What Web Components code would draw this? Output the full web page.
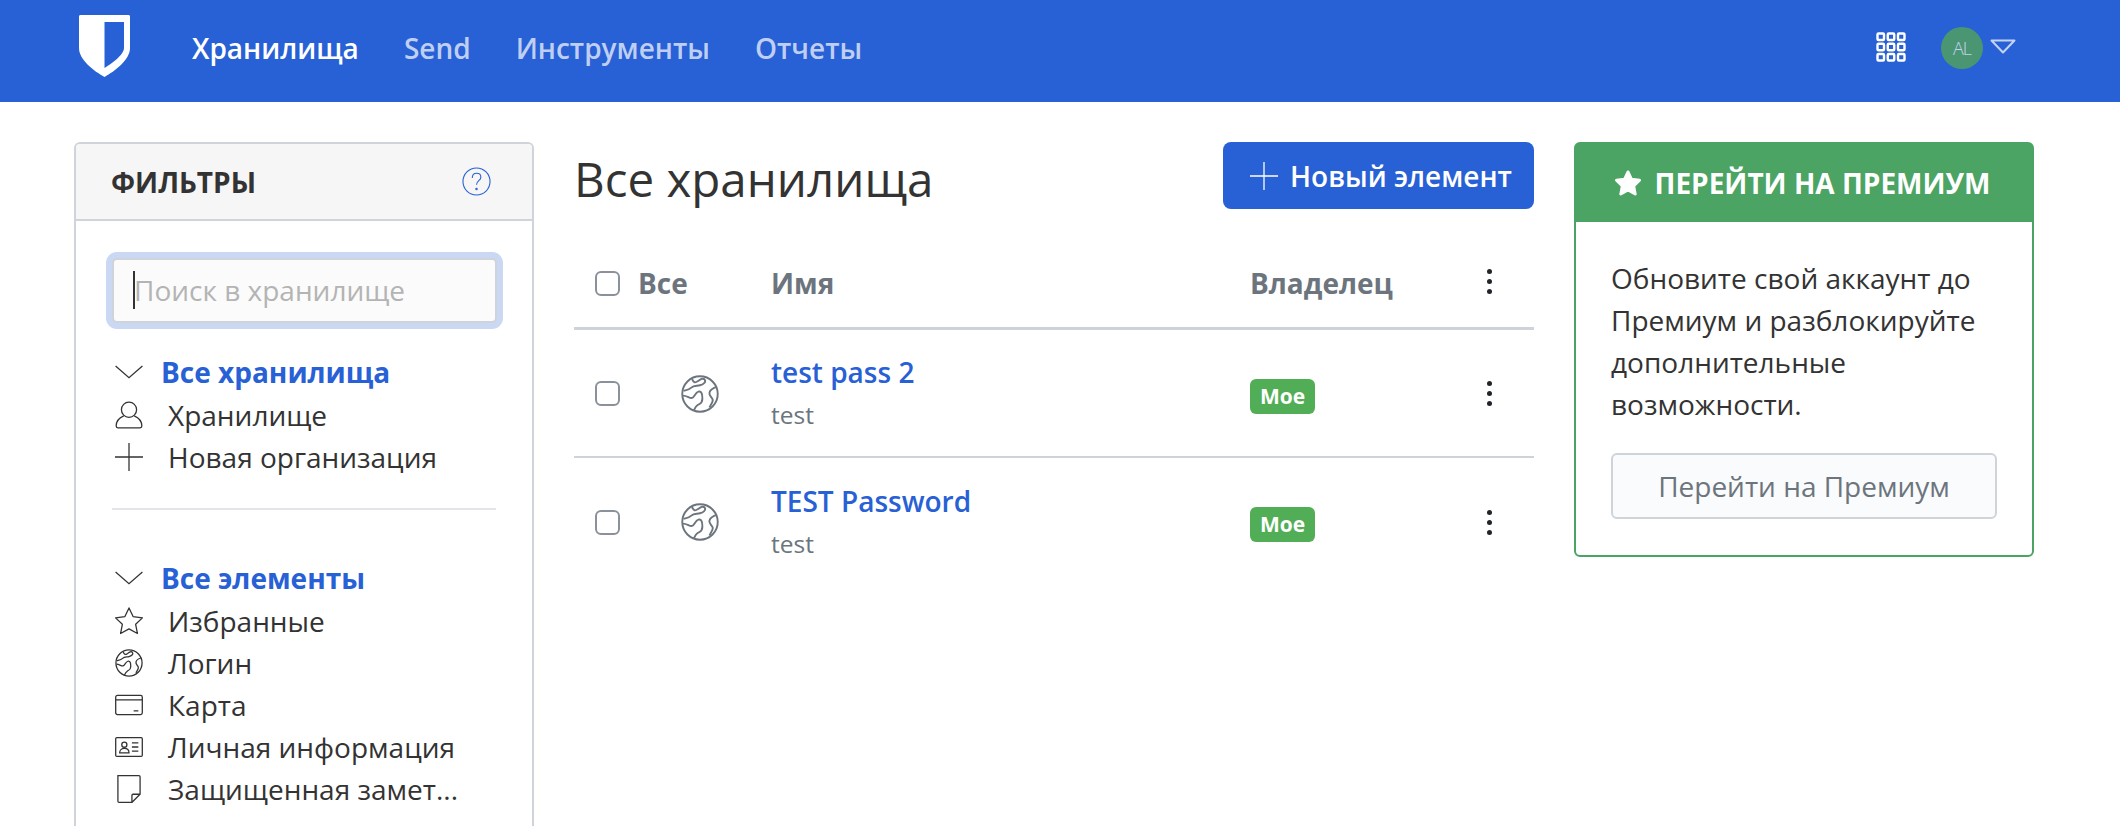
<!DOCTYPE html>
<html lang="ru">
<head>
<meta charset="utf-8">
<title>Хранилища</title>
<style>
  html, body { margin: 0; height: 826px; overflow: hidden; background: #fff; }
  body { font: 28px/42px "Open Sans", "Liberation Sans", sans-serif; color: #333; }
</style>
</head>
<body>
<bw-nav></bw-nav>
<vault-page>
  <filter-panel slot="left"></filter-panel>
  <vault-list slot="mid">
    <vault-row name="test pass 2" sub="test"></vault-row>
    <vault-row name="TEST Password" sub="test"></vault-row>
  </vault-list>
  <premium-card slot="right"></premium-card>
</vault-page>

<script>
const ICONS = {
  chevron: '<path d="M.5 6L12 16 23.5 6"/>',
  user: '<circle cx="12" cy="7.5" r="6.5"/><path d="M7.5 12.8C3.5 14.5 1 18 1 21.5c0 1 .6 1.500 1.500 1.500h19c.9 0 1.500-.5 1.500-1.500 0-3.500-2.500-7-6.500-8.700"/>',
  plus: '<path d="M12 0v24M0 12h24"/>',
  star: '<path d="M12 .8l3.500 7.400 8 1.100-5.800 5.500 1.500 7.900L12 18.800l-7.200 3.900 1.500-7.900L.5 9.300l8-1.100z" stroke-linejoin="round"/>',
  globe: '<circle cx="12" cy="12" r="11.200"/><path d="M7 2.600C8 5 9 5 10.500 4S14 1.500 15 3s-1 3-3 3.500-4 0-5.500 1.500S3.500 9.500 1.600 10M1.200 13c2.800 0 4.300 2 5.800 1.500S9 11 11 10.500s2.500 1.500 2.500 4.500-1.500 3-3 4-2 2.500-2.500 3.500M22.500 7.500C21 8 18.500 9 18 11s1.500 3 2 4.500-1.500 3.500-2 5"/>',
  card: '<rect x=".6" y="3.800" width="22.800" height="16.400" rx="1.500"/><path d="M.6 7.600h22.800M16 17h4"/>',
  id: '<rect x=".6" y="4" width="22.800" height="16" rx="1"/><circle cx="8" cy="10" r="2.200"/><path d="M4 17c0-5 8-5 8 0zM14.500 8.500h5.500M14.500 12h5.500M14.500 15.500h5.500"/>',
  note: '<path d="M2.500 .6h18c.6 0 1 .4 1 1v14.900l-6.900 6.900H3.500c-.6 0-1-.4-1-1zM21.500 16.500h-6c-.6 0-1 .4-1 1v5.900"/>',
  help: '<circle cx="12" cy="12" r="11.200"/><path d="M8.500 9c0-2.300 1.500-3.800 3.600-3.800s3.500 1.400 3.500 3.200c0 2.800-3.600 3-3.600 6.200"/><circle cx="12" cy="18.200" r=".6"/>'
};

class BwIcon extends HTMLElement {
  connectedCallback() {
    const size = this.getAttribute('size') || 28;
    const sw = this.getAttribute('stroke') || 1.1;
    this.attachShadow({ mode: 'open' });
    this.shadowRoot.innerHTML = `
      <style>
        :host { display: inline-flex; flex: none; }
        svg { display: block; fill: none; stroke: currentColor; }
      </style>
      <svg width="${size}" height="${size}" viewBox="0 0 24 24" stroke-width="${sw}">${ICONS[this.getAttribute('name')]}</svg>`;
  }
}
customElements.define('bw-icon', BwIcon);

class BwNav extends HTMLElement {
  connectedCallback() {
    this.attachShadow({ mode: 'open' });
    const grid = [0, 1, 2].flatMap(r => [0, 1, 2].map(c =>
      `<rect x="${1.5 + c * 10.25}" y="${1.5 + r * 10.25}" width="6.5" height="6.5" rx="1"/>`)).join('');
    this.shadowRoot.innerHTML = `
      <style>
        :host { display: flex; align-items: center; height: 102px; padding: 0 104px 6px 79px;
          background: #2860d5; color: #fff; box-sizing: border-box; }
        .logo { display: block; margin: -4px 62px 0 0; }
        a { font-weight: 600; margin-right: 45px; color: #bfcff2; }
        a.on { color: #fff; }
        .apps { margin: -3px 35px 0 auto; display: block; fill: none; stroke: #fff; stroke-width: 2.4; }
        .avatar { width: 42px; height: 42px; border-radius: 50%; background: #4a9673; color: #c5d3ee; display: flex;
          align-items: center; justify-content: center; font: 300 18px "Open Sans", sans-serif; letter-spacing: -1px; }
        .caret { display: block; margin: -3px 0 0 7px; fill: none; stroke: #c5d3f3; stroke-width: 2; stroke-linejoin: round; }
      </style>
      <svg class="logo" width="51" height="62" viewBox="0 0 51 62">
        <path fill="#fff" fill-rule="evenodd" d="M1.500 0H49.500C50.400 0 51 .6 51 1.500V33C51 45 36 56 25.500 62 15 56 0 45 0 33V1.500C0 .6 .6 0 1.500 0ZM25.500 7V53C32 49 45 40 45 33V7Z"/>
      </svg>
      <a class="on">Хранилища</a><a>Send</a><a>Инструменты</a><a>Отчеты</a>
      <svg class="apps" width="30" height="30" viewBox="0 0 30 30">${grid}</svg>
      <div class="avatar">AL</div>
      <svg class="caret" width="26" height="15" viewBox="0 0 26 15"><path d="M1.500 1.500H24.500L13 13.500Z"/></svg>`;
  }
}
customElements.define('bw-nav', BwNav);

class VaultPage extends HTMLElement {
  connectedCallback() {
    this.attachShadow({ mode: 'open' });
    this.shadowRoot.innerHTML = `
      <style>
        :host { display: grid; grid-template-columns: 460px 960px 460px; column-gap: 40px; align-items: start;
          padding: 40px 0 0 74px; }
      </style>
      <slot name="left"></slot><slot name="mid"></slot><slot name="right"></slot>`;
  }
}
customElements.define('vault-page', VaultPage);

class FilterPanel extends HTMLElement {
  connectedCallback() {
    this.attachShadow({ mode: 'open' });
    const item = (icon, text) => `<div class="item"><bw-icon name="${icon}"></bw-icon><span>${text}</span></div>`;
    const head = text => `<div class="head"><bw-icon name="chevron"></bw-icon><b>${text}</b></div>`;
    this.shadowRoot.innerHTML = `
      <style>
        :host { display: block; border: 2px solid #ced4da; border-radius: 6px; height: 690px; box-sizing: border-box; }
        header { display: flex; justify-content: space-between; align-items: center; height: 77px; padding: 0 41px 0 35px;
          background: #f6f6f6; border-bottom: 2px solid #ced4da; border-radius: 4px 4px 0 0; box-sizing: border-box; }
        h2 { margin: 0; font-size: 28px; font-weight: 700; color: #333; }
        header bw-icon { color: #2860d5; }
        .body { padding: 37px 36px 0; }
        .search { height: 65px; width: 385px; border: 2px solid #ced4da; border-radius: 5px; background: #fbfbfb; box-sizing: border-box;
          box-shadow: 0 0 0 6px #cad8f3; padding: 0 0 2px 20px; display: flex; align-items: center;
          color: #b4b4b4; position: relative; }
        .caret { position: absolute; left: 19px; top: 11px; width: 2px; height: 38px; background: #333; }
        .tree { margin-top: 29px; }
        .head, .item { display: flex; align-items: center; height: 42px; color: #333; white-space: nowrap; }
        .head { color: #2860d5; }
        .head bw-icon { color: #333; margin-left: 3px; margin-right: 18px; }
        .head b { font-weight: 700; margin-top: -2px; }
        .item bw-icon { margin-left: 3px; margin-right: 25px; }
        hr { border: 0; border-top: 2px solid #e3e5e8; margin: 30px 0 48px; }
      </style>
      <header><h2>ФИЛЬТРЫ</h2><bw-icon name="help" stroke="0.9" size="29"></bw-icon></header>
      <div class="body">
        <div class="search"><i class="caret"></i>Поиск в хранилище</div>
        <div class="tree">
          ${head('Все хранилища')}
          ${item('user', 'Хранилище')}
          ${item('plus', 'Новая организация')}
          <hr>
          ${head('Все элементы')}
          ${item('star', 'Избранные')}
          ${item('globe', 'Логин')}
          ${item('card', 'Карта')}
          ${item('id', 'Личная информация')}
          ${item('note', 'Защищенная замет...')}
        </div>
      </div>`;
  }
}
customElements.define('filter-panel', FilterPanel);

const ROW_GRID = `display: grid; grid-template-columns: 64px 133px 479px 1fr 70px; align-items: center;`;

class KebabDots extends HTMLElement {
  connectedCallback() {
    this.attachShadow({ mode: 'open' });
    this.shadowRoot.innerHTML = `
      <style>
        :host { display: block; width: 5px; margin-left: 23px; }
        i { display: block; width: 5px; height: 5px; border-radius: 50%; background: #212529; margin-bottom: 5px; }
        i:last-child { margin: 0; }
      </style><i></i><i></i><i></i>`;
  }
}
customElements.define('kebab-dots', KebabDots);

class VaultCheck extends HTMLElement {
  connectedCallback() {
    this.attachShadow({ mode: 'open' });
    this.shadowRoot.innerHTML = `
      <style>
        :host { display: block; width: 25px; height: 25px; margin-left: 21px; box-sizing: border-box;
          border: 2px solid #8b919b; border-radius: 6px; background: #fff; }
      </style>`;
  }
}
customElements.define('vault-check', VaultCheck);

class VaultList extends HTMLElement {
  connectedCallback() {
    this.attachShadow({ mode: 'open' });
    this.shadowRoot.innerHTML = `
      <style>
        :host { display: block; }
        .top { display: flex; justify-content: space-between; align-items: flex-start; height: 99px; }
        h1 { margin: 0; font-size: 47.5px; font-weight: 400; line-height: 60px; color: #333; padding: 7px 0 0; }
        button { display: flex; align-items: center; gap: 12px; height: 67px; width: 311px; padding: 0 0 0 27px; border: 0;
          border-radius: 8px; background: #2860d5; color: #fff; font: 600 28px "Open Sans", sans-serif; box-sizing: border-box; }
        .th { ${ROW_GRID} height: 89px; border-bottom: 3px solid #ced2db; font-weight: 700; color: #6c757d; box-sizing: border-box; }
        .th vault-check, .th span { margin-top: -2px; }
        .th kebab-dots { margin-top: -5px; }
      </style>
      <div class="top">
        <h1>Все хранилища</h1>
        <button><bw-icon name="plus"></bw-icon>Новый элемент</button>
      </div>
      <div class="th">
        <vault-check></vault-check><span>Все</span><span>Имя</span><span>Владелец</span><kebab-dots></kebab-dots>
      </div>
      <slot></slot>`;
  }
}
customElements.define('vault-list', VaultList);

class VaultRow extends HTMLElement {
  connectedCallback() {
    this.attachShadow({ mode: 'open' });
    this.shadowRoot.innerHTML = `
      <style>
        :host { ${ROW_GRID} height: 127.5px; padding-top: 2px; border-bottom: 2px solid #ced2db; box-sizing: border-box; }
        :host(:last-child) { border-bottom: 0; }
        .ic { display: flex; color: #6c757d; margin-left: 43px; }
        .name { color: #2860d5; font-weight: 600; }
        .sub { color: #6c757d; font-size: 24.5px; margin-top: 1px; }
        .owner { display: flex; margin-top: 5px; }
        .badge { background: #52ae56; color: #fff; font-weight: 700; font-size: 21px; line-height: 35px;
          padding: 0 10px; border-radius: 6px; }
      </style>
      <vault-check></vault-check>
      <div class="ic"><bw-icon name="globe" size="38" stroke="1.2"></bw-icon></div>
      <div><div class="name">${this.getAttribute('name')}</div><div class="sub">${this.getAttribute('sub')}</div></div>
      <div class="owner"><span class="badge">Мое</span></div>
      <kebab-dots></kebab-dots>`;
  }
}
customElements.define('vault-row', VaultRow);

class PremiumCard extends HTMLElement {
  connectedCallback() {
    this.attachShadow({ mode: 'open' });
    this.shadowRoot.innerHTML = `
      <style>
        :host { display: block; border: 2px solid #4ba364; border-radius: 6px; height: 415px; box-sizing: border-box; }
        header { display: flex; align-items: center; justify-content: center; gap: 13px; height: 78px; padding-right: 4px;
          background: #4ba364; color: #fff; font-weight: 700; }
        svg { display: block; fill: #fff; }
        .body { padding: 35px 35px 0; }
        p { margin: 0 0 28px; color: #333; }
        button { display: block; width: 100%; height: 66px; border: 2px solid #ced4da; border-radius: 6px; background: #fafbfc;
          color: #6c757d; font: 400 28px "Open Sans", sans-serif; }
      </style>
      <header>
        <svg width="28" height="28" viewBox="0 0 24 24"><path stroke="#fff" stroke-width="2.5" stroke-linejoin="round" d="M12 2.500l3 6.300 6.900.9-5 4.800 1.300 6.900-6.200-3.400-6.200 3.400 1.300-6.900-5-4.800 6.900-.9z"/></svg>
        <span>ПЕРЕЙТИ НА ПРЕМИУМ</span>
      </header>
      <div class="body">
        <p>Обновите свой аккаунт до Премиум и разблокируйте дополнительные возможности.</p>
        <button>Перейти на Премиум</button>
      </div>`;
  }
}
customElements.define('premium-card', PremiumCard);
</script>
</body>
</html>
